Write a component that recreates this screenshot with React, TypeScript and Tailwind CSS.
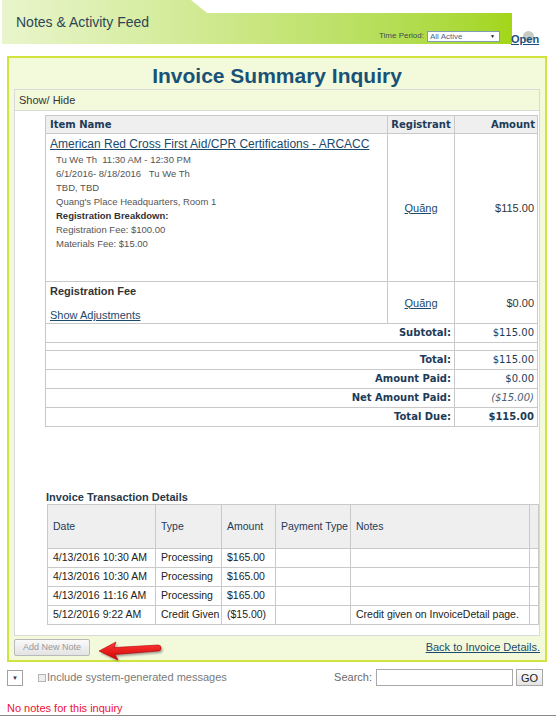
import React from 'react'

const arial = "font-['Liberation_Sans',Arial,sans-serif]"
const verdana = "font-['DejaVu_Sans',Verdana,sans-serif]"

const details = [
  { text: 'Tu We Th  11:30 AM - 12:30 PM' },
  { text: '6/1/2016- 8/18/2016   Tu We Th' },
  { text: 'TBD, TBD' },
  { text: "Quang's Place Headquarters, Room 1" },
  { text: 'Registration Breakdown:', strong: true },
  { text: 'Registration Fee: $100.00' },
  { text: 'Materials Fee: $15.00' },
]

const summary = [
  { label: 'Subtotal:', value: '$115.00' },
  { label: 'Total:', value: '$115.00' },
  { label: 'Amount Paid:', value: '$0.00' },
  { label: 'Net Amount Paid:', value: '($15.00)', italic: true },
  { label: 'Total Due:', value: '$115.00', bold: true },
]

const transactions = [
  { date: '4/13/2016 10:30 AM', type: 'Processing', amount: '$165.00', notes: '' },
  { date: '4/13/2016 10:30 AM', type: 'Processing', amount: '$165.00', notes: '' },
  { date: '4/13/2016 11:16 AM', type: 'Processing', amount: '$165.00', notes: '' },
  { date: '5/12/2016 9:22 AM', type: 'Credit Given', amount: '($15.00)', notes: 'Credit given on InvoiceDetail page.' },
]

function Header() {
  return (
    <div className="flex items-end">
      <div className="ml-[2px] flex h-[44px] w-[510px] flex-col bg-linear-to-r from-[#e9f5cc] via-[#c9e67f] to-[#a3d616] [clip-path:polygon(0_0,189px_0,205px_13px,100%_13px,100%_100%,0_100%)]">
        <div className={`pl-[14px] pt-[14px] text-[14px] leading-[16px] text-[#2d4656] ${arial}`}>
          Notes &amp; Activity Feed
        </div>
        <div className="mt-auto mb-[3px] flex items-center justify-end gap-[3px] pr-[12px]">
          <span className={`text-[8px] text-[#3d4d5a] ${arial}`}>Time Period:</span>
          <div className="flex h-[11px] w-[73px] items-center justify-between border border-[#7f9db5] bg-white pl-[2px] pr-[4px]">
            <span className={`text-[8px] leading-[9px] text-[#4a6782] ${arial}`}>All Active</span>
            <span className="text-[5px] leading-none text-[#111]">▼</span>
          </div>
        </div>
      </div>
      <div className={`relative ml-[-1px] mb-[-1px] text-[11px] leading-[12px] ${arial}`}>
        <span className="absolute left-[12px] top-[-2px] h-[11px] w-[11px] rounded-full bg-[#c6ccc3]" />
        <a className="relative font-semibold text-[#1d4f7d] underline">Open</a>
      </div>
    </div>
  )
}

function ItemTable() {
  const cell = 'border border-[#c9c9c9]'
  return (
    <table className="w-[493px] border-collapse">
      <thead>
        <tr className="h-[18px] bg-[#efefef]">
          <th className={`${cell} px-[4px] text-left text-[10px] font-bold text-[#1d3b58] ${verdana}`}>Item Name</th>
          <th className={`${cell} w-[67px] text-center text-[10px] font-bold text-[#1d3b58] ${verdana}`}>Registrant</th>
          <th className={`${cell} w-[83px] pr-[2px] text-right text-[10px] font-bold text-[#1d3b58] ${verdana}`}>Amount</th>
        </tr>
      </thead>
      <tbody className={`text-[11px] leading-[14px] ${arial}`}>
        <tr className="h-[148px]">
          <td className={`${cell} px-[4px] pt-[2px] align-top`}>
            <a className="block text-[12px] leading-[16px] text-[#1b4a6d] underline">
              American Red Cross First Aid/CPR Certifications - ARCACC
            </a>
            <div className="pl-[6px] pt-[1px]">
              {details.map((d) => (
                <div
                  key={d.text}
                  className={`whitespace-pre text-[9.5px] leading-[14px] ${d.strong ? 'font-semibold text-[#333]' : 'text-[#555]'}`}
                >
                  {d.text}
                </div>
              ))}
            </div>
          </td>
          <td className={`${cell} text-center align-middle`}>
            <a className="text-[#1b4a6d] underline">Quãng</a>
          </td>
          <td className={`${cell} pr-[3px] text-right text-[#333] align-middle`}>$115.00</td>
        </tr>
        <tr className="h-[42px]">
          <td className={`${cell} px-[4px] pt-[2px] pb-[1px] align-top`}>
            <div className="font-bold text-[#333]">Registration Fee</div>
            <a className="mt-[10px] block text-[#1b4a6d] underline">Show Adjustments</a>
          </td>
          <td className={`${cell} text-center align-middle`}>
            <a className="text-[#1b4a6d] underline">Quãng</a>
          </td>
          <td className={`${cell} pr-[3px] text-right text-[#333] align-middle`}>$0.00</td>
        </tr>
        {summary.map((s, i) => (
          <React.Fragment key={s.label}>
            <tr className="h-[19px]">
              <td colSpan={2} className={`${cell} pr-[3px] text-right text-[10px] font-bold text-[#1d3b58] ${verdana}`}>
                {s.label}
              </td>
              <td
                className={`${cell} pr-[3px] text-right text-[10px] ${verdana} ${s.italic ? 'italic text-[#4a5d70]' : 'text-[#1d3b58]'} ${s.bold ? 'font-bold' : ''}`}
              >
                {s.value}
              </td>
            </tr>
            {i === 0 && (
              <tr className="h-[8px]">
                <td colSpan={2} className={cell} />
                <td className={cell} />
              </tr>
            )}
          </React.Fragment>
        ))}
      </tbody>
    </table>
  )
}

function TransactionTable() {
  const cell = 'border border-[#c9c9c9] pl-[5px] text-left'
  return (
    <div className="ml-[1px]">
      <div className={`text-[11px] leading-[13px] font-bold text-[#26394a] ${arial}`}>Invoice Transaction Details</div>
      <table className={`ml-[1px] w-[491px] table-fixed border-collapse text-[10.5px] ${arial}`}>
        <colgroup>
          <col className="w-[108px]" />
          <col className="w-[66px]" />
          <col className="w-[54px]" />
          <col className="w-[75px]" />
          <col className="w-[179px]" />
          <col className="w-[9px]" />
        </colgroup>
        <thead>
          <tr className="h-[44px] bg-[#efefef] text-[#1d3b58]">
            <th className={`${cell} font-normal`}>Date</th>
            <th className={`${cell} font-normal`}>Type</th>
            <th className={`${cell} font-normal`}>Amount</th>
            <th className={`${cell} whitespace-nowrap pl-[4px] font-normal`}>Payment Type</th>
            <th className={`${cell} pl-[3px] font-normal`}>Notes</th>
            <th className={cell} />
          </tr>
        </thead>
        <tbody className="text-[#222]">
          {transactions.map((t, i) => (
            <tr key={i} className="h-[19px]">
              <td className={`${cell} whitespace-nowrap pl-[4px]`}>{t.date}</td>
              <td className={`${cell} whitespace-nowrap pl-[3px]`}>{t.type}</td>
              <td className={`${cell} whitespace-nowrap pl-[3px]`}>{t.amount}</td>
              <td className={cell} />
              <td className={`${cell} whitespace-nowrap pl-[3px]`}>{t.notes}</td>
              <td className={cell} />
            </tr>
          ))}
        </tbody>
      </table>
    </div>
  )
}

function RedArrow() {
  return (
    <svg width="68" height="24" viewBox="0 0 68 24" className="ml-[6px] mt-[3px]">
      <defs>
        <linearGradient id="arrowFill" x1="0" y1="0" x2="0" y2="1">
          <stop offset="0" stopColor="#ff3b3b" />
          <stop offset="1" stopColor="#d00000" />
        </linearGradient>
        <filter id="arrowShadow" x="-20%" y="-20%" width="140%" height="160%">
          <feGaussianBlur stdDeviation="1.3" />
        </filter>
      </defs>
      <path
        d="M3 12 L20 3 L18 8.5 L62 6 Q65 6 65 9 Q65 12 62 12 L19 15.5 L22 21 Z"
        fill="#555"
        opacity="0.55"
        filter="url(#arrowShadow)"
        transform="translate(1.5 2)"
      />
      <path
        d="M3 12 L20 3 L18 8.5 L62 6 Q65 6 65 9 Q65 12 62 12 L19 15.5 L22 21 Z"
        fill="url(#arrowFill)"
        stroke="#b30000"
        strokeWidth="0.6"
      />
    </svg>
  )
}

function Panel() {
  return (
    <div className="ml-[7px] mt-[12px] flex w-[540px] flex-col border-2 border-[#d1e43d] bg-[#f3f9db]">
      <h1 className={`pt-[6px] text-center text-[21px] leading-[24px] font-bold text-[#185276] ${arial}`}>
        Invoice Summary Inquiry
      </h1>
      <div className="mx-[5px] mt-[1px] border border-[#d9d9d9]">
        <div className={`h-[21px] border-b border-[#d9d9d9] pl-[4px] text-[11px] leading-[20px] text-[#333] ${arial}`}>
          Show/ Hide
        </div>
        <div className="bg-white pb-[10px] pl-[30px] pr-[1px] pt-[4px]">
          <ItemTable />
          <div className="mt-[64px]">
            <TransactionTable />
          </div>
        </div>
      </div>
      <div className="flex h-[24px] items-start justify-between px-[5px]">
        <div className="flex items-start">
          <button
            className={`mt-[3px] h-[17px] w-[76px] rounded-[2px] border border-[#b9b9b9] bg-linear-to-b from-[#fafafa] to-[#e3e3e3] text-[9px] text-[#9a9a9a] ${arial}`}
          >
            Add New Note
          </button>
          <RedArrow />
        </div>
        <a className={`mt-[5px] text-[11px] leading-[13px] text-[#1b4a6d] underline ${arial}`}>Back to Invoice Details.</a>
      </div>
    </div>
  )
}

function Controls() {
  return (
    <div className={`mt-[7px] flex h-[17px] items-center pl-[7px] pr-[13px] ${arial}`}>
      <div className="flex h-[16px] w-[16px] items-center justify-center border border-[#a0a0a0] bg-white">
        <span className="text-[6px] leading-none text-[#1d3b58]">▼</span>
      </div>
      <span className="ml-[15px] h-[8px] w-[8px] border border-[#b5b5b5] bg-[#eee]" />
      <span className="ml-[1px] text-[11px] text-[#7a7a7a]">Include system-generated messages</span>
      <span className="ml-auto text-[11px] text-[#6a6a6a]">Search:</span>
      <input className="ml-[4px] h-[17px] w-[137px] border border-[#a8a8a8] bg-white outline-none" />
      <button className="ml-[3px] h-[17px] w-[27px] border border-[#a8a8a8] bg-linear-to-b from-[#fbfbfb] to-[#e4e4e4] text-[11px] text-[#222]">
        GO
      </button>
    </div>
  )
}

export default function App() {
  return (
    <div className="flex h-[716px] w-[556px] flex-col overflow-hidden bg-white">
      <Header />
      <Panel />
      <Controls />
      <div className={`ml-[7px] mt-[16px] text-[11px] leading-[13px] text-[#ee1133] ${arial}`}>No notes for this inquiry</div>
      <div className="mt-auto h-[3px] w-full bg-[#8a8a8a]" />
    </div>
  )
}
